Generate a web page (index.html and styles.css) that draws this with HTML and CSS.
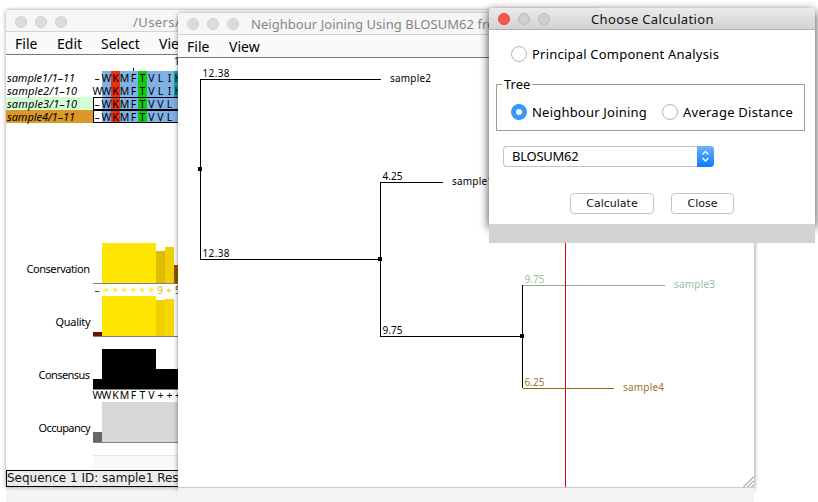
FILE: index.html
```html
<!DOCTYPE html>
<html lang="en">
<head>
<meta charset="utf-8">
<title>Choose Calculation</title>
<link rel="stylesheet" href="styles.css">
</head>
<body>
<main class="desktop">
  <section class="window alignment">
    <header class="titlebar"><i class="dot"></i><i class="dot"></i><i class="dot"></i><span class="title users">/Users/</span></header>
    <nav class="menubar"><span class="m-file">File</span><span class="m-edit">Edit</span><span class="m-select">Select</span><span class="m-view">View</span></nav>
    <svg class="view" width="172" height="415" viewBox="6 55 172 415">
      <g shape-rendering="crispEdges">
        <rect x="6" y="97" width="87" height="13" fill="#d4ffd6"/>
        <rect x="6" y="110" width="87" height="13" fill="#d99828"/>
        <rect x="133" y="68" width="1" height="3"/>
        <rect x="102" y="71" width="76" height="52" fill="#80b2e6"/>
        <rect x="111" y="71" width="9" height="52" fill="#e63311"/>
        <rect x="138" y="71" width="9" height="52" fill="#0fcb0f"/>
        <rect x="174" y="71" width="4" height="26" fill="#15a4a4"/>
        <path d="M180 97.5H93.5V109.5H180M180 110.500H93.5V122.500H180" fill="none" stroke="#000"/>
        <rect x="102" y="243" width="54" height="40" fill="#ffe600"/>
        <rect x="156" y="251" width="9" height="32" fill="#e1bb00"/>
        <rect x="165" y="247" width="9" height="36" fill="#f0d000"/>
        <rect x="174" y="265" width="4" height="18" fill="#8c5a00"/>
        <rect x="102" y="296" width="54" height="40" fill="#ffe600"/>
        <rect x="156" y="300" width="9" height="36" fill="#f0d000"/>
        <rect x="165" y="299" width="9" height="37" fill="#f5d800"/>
        <rect x="93" y="332" width="9" height="4" fill="#641400"/>
        <path d="M93 379H102V349H156V369H178V389H93z"/>
        <rect x="102" y="402" width="76" height="40" fill="#d8d8d8"/>
        <rect x="93" y="432" width="9" height="10" fill="#666"/>
        <path d="M93 283.5H178M93 336.500H178M93 389.500H178M93 442.500H178" stroke="#808080"/>
        <rect x="93" y="455" width="85" height="15" fill="#f9f9f9"/>
        <rect x="93" y="455" width="85" height="1" fill="#e6e6e6"/>
      </g>
      <g class="ids">
        <text x="7" y="82" textLength="68">sample1/1–11</text>
        <text x="7" y="95" textLength="70">sample2/1–10</text>
        <text x="7" y="108" textLength="70">sample3/1–10</text>
        <text x="7" y="121" textLength="68">sample4/1–11</text>
      </g>
      <g class="residues">
        <text x="177" y="65">1</text>
        <text y="82" x="97 106.500 115.500 124.500 133.500 142.500 151.500 160.500 169.500 178.500">–WKMFTVLIH</text>
        <text y="95" x="97.5 106.500 115.500 124.500 133.500 142.500 151.500 160.500 169.500 178.500">WWKMFTVLIH</text>
        <text y="108" x="97 106.500 115.500 124.500 133.500 142.500 151.500 160.500 169.500">–WKMFTVVL</text>
        <text y="121" x="97 106.500 115.500 124.500 133.500 142.500 151.500 160.500 169.500">–WKMFTVVL</text>
        <text y="295" fill="#ffe600" x="106.500 115.500 124.500 133.500 142.500 151.500">******</text>
        <text y="294" x="97"><tspan fill="#5a0a00">–</tspan><tspan x="160" fill="#e1bb00">9</tspan><tspan x="169" fill="#f0d000">+</tspan><tspan x="178" fill="#8c5a00">5</tspan></text>
        <text y="399" x="97.5 106.500 115.500 124.500 133.500 142.500 151.500 160.500 169.500 178">WWKMFTV+++</text>
      </g>
      <g class="labels">
        <text x="26.500" y="273" textLength="63.500">Conservation</text>
        <text x="55.500" y="326" textLength="35">Quality</text>
        <text x="38.500" y="379" textLength="51.500">Consensus</text>
        <text x="38.500" y="432" textLength="52">Occupancy</text>
      </g>
    </svg>
    <div class="status">Sequence 1 ID: sample1 Residue</div>
  </section>

  <section class="window tree">
    <header class="titlebar"><i class="dot"></i><i class="dot"></i><i class="dot"></i><span class="title joining">Neighbour Joining Using BLOSUM62 from</span></header>
    <nav class="menubar"><span class="m-file">File</span><span class="m-view">View</span></nav>
    <svg class="view" width="576" height="429" viewBox="178 58 576 429">
      <g shape-rendering="crispEdges" fill="none" stroke="#000">
        <path d="M381 79.500H200.500V259.500H380M443 182.500H380.500V336.500H522M522.500 285V388"/>
        <path d="M523 285.500H665" stroke="#8fb08f"/>
        <path d="M523 388.500H614" stroke="#966414"/>
        <path d="M565.500 58V487" stroke="#e60000"/>
      </g>
      <path shape-rendering="crispEdges" d="M198 167h4v4h-4zM378 257h4v4h-4zM520 334h4v4h-4z"/>
      <g class="tree-text">
        <text x="202.500" y="77" textLength="27">12.38</text>
        <text x="390" y="82" textLength="41">sample2</text>
        <text x="382.500" y="180" textLength="20">4.25</text>
        <text x="452" y="185" textLength="41">sample1</text>
        <text x="202.500" y="257" textLength="27">12.38</text>
        <text x="382.500" y="334" textLength="20">9.75</text>
        <g fill="#9fbb9f"><text x="524.500" y="283" textLength="20">9.75</text><text x="674" y="288" textLength="41">sample3</text></g>
        <g fill="#a07433"><text x="524.500" y="386" textLength="20">6.25</text><text x="623" y="391" textLength="41">sample4</text></g>
      </g>
      <path d="M743 487.500L754 476.500M747 487.500L754 480.500M751 487.500L754 484.500" stroke="#777" fill="none"/>
    </svg>
  </section>

  <section class="window dialog">
    <header class="titlebar"><i class="dot red"></i><i class="dot"></i><i class="dot"></i><span class="title choose">Choose Calculation</span></header>
    <div class="form">
      <label class="option pca"><i class="radio"></i><span class="t-pca">Principal Component Analysis</span></label>
      <fieldset class="group"><legend>Tree</legend>
        <label class="option"><i class="radio on"></i><span class="t-nj">Neighbour Joining</span></label>
        <label class="option avg"><i class="radio"></i><span class="t-ad">Average Distance</span></label>
      </fieldset>
      <div class="select"><span>BLOSUM62</span><svg width="17" height="21" viewBox="0 0 17 21"><path d="M5.500 8.500L8.500 5.500L11.500 8.500M5.500 12L8.500 15L11.500 12" fill="none" stroke="#fff" stroke-width="1.300"/></svg></div>
      <div class="actions"><button class="calc">Calculate</button><button class="close">Close</button></div>
    </div>
  </section>
</main>
</body>
</html>
```
FILE: styles.css
```css
* { box-sizing: border-box; }
body { margin: 0; background: #fff; font-family: "Noto Sans", "Open Sans", sans-serif; color: #111; }
.desktop { position: relative; width: 818px; height: 502px; overflow: hidden; }
.window { position: absolute; display: flex; flex-direction: column; background: #fff; border-radius: 4px 4px 0 0; }
.alignment { left: 6px; top: 10px; width: 600px; height: 477px; box-shadow: 0 0 4px rgba(0,0,0,.4), 0 15px 0 #f4f4f4; }
.tree { left: 178px; top: 13px; width: 576px; height: 475px; border-bottom: 1px solid #ccc; box-shadow: 0 14px 0 #f4f4f4, 0 1px 5px rgba(0,0,0,.5); }
.dialog { left: 489px; top: 8px; width: 326px; height: 216px; box-shadow: 0 19px 0 #d3d3d3, 0 3px 9px 1px rgba(0,0,0,.65); }
.titlebar { display: flex; align-items: center; height: 22px; flex: none; padding-left: 9px; gap: 8px; background: #f6f6f6; border-bottom: 1px solid #d2d2d2; border-radius: 4px 4px 0 0; white-space: nowrap; overflow: hidden; }
.dot { width: 12px; height: 12px; flex: none; border-radius: 50%; background: #dcdcdc; border: 1px solid #d0d0d0; }
.dialog .titlebar { background: linear-gradient(#ebebeb, #d2d2d2); border-color: #b1b1b1; }
.dialog .dot { background: #cfcfcf; border-color: #bcbcbc; }
.dialog .dot.red { background: #fc5850; border-color: #e2463f; }
.title { font-size: 13px; line-height: 18px; color: #858585; }
.alignment .titlebar { padding-top: 2px; }
.users { margin-left: 58px; letter-spacing: .4px; }
.joining { margin-left: 4px; letter-spacing: .04px; }
.choose { margin-left: 33px; color: #111; letter-spacing: .34px; }
.menubar { display: flex; align-items: center; flex: none; height: 23px; padding-left: 9px; background: #fafafa; border-bottom: 1px solid #777; font-size: 14px; color: #000; }
.alignment .m-file { width: 42px; }
.alignment .m-edit { width: 44px; }
.alignment .m-select { width: 58px; }
.tree .m-file { width: 42px; }
.view { display: block; flex: none; }
.status { width: 400px; height: 17px; flex: none; border: 1px solid #000; background: #ececec; font: 12px/15px "DejaVu Sans", sans-serif; white-space: nowrap; }
.ids { font: italic 11px "Noto Sans", sans-serif; }
.residues { font: 10.500px "Noto Sans", sans-serif; text-anchor: middle; }
.labels { font: 11px "Noto Sans", sans-serif; }
.tree-text { font: 10px "Noto Sans", sans-serif; }
.form { display: flex; flex-direction: column; font-size: 13px; color: #000; }
.option { display: flex; align-items: center; height: 18px; gap: 5px; white-space: nowrap; }
.t-pca, .t-nj { letter-spacing: .21px; }
.t-ad { letter-spacing: .25px; }
.radio { width: 16px; height: 16px; flex: none; border: 1px solid #b5b5b5; border-radius: 50%; background: #fff; }
.radio.on { border: 5px solid #3498fc; }
.pca { margin: 15px 0 0 22px; }
.group { display: flex; gap: 15px; width: 309px; height: 53px; margin: 15px 0 0 7px; padding: 12px 0 0 14px; border: 1px solid #9c9c9c; min-width: 0; }
.group legend { padding: 0 2px; margin-left: -9px; line-height: 13px; }
.select { display: flex; justify-content: space-between; width: 211px; height: 21px; margin: 15px 0 0 14px; padding-left: 8px; border: 1px solid #c4c4c4; border-right: 0; border-radius: 4px; line-height: 19px; letter-spacing: -.25px; }
.select svg { margin-top: -1px; background: linear-gradient(#6cb3fa, #087dff); border-radius: 0 4px 4px 0; }
.actions { display: flex; gap: 17px; margin: 26px 0 0 81px; }
.actions button { height: 21px; padding: 0; border: 1px solid #c4c4c4; border-radius: 4px; background: #fff; font: 11px "DejaVu Sans", sans-serif; color: #111; }
.calc { width: 84px; }
.close { width: 63px; }
```
